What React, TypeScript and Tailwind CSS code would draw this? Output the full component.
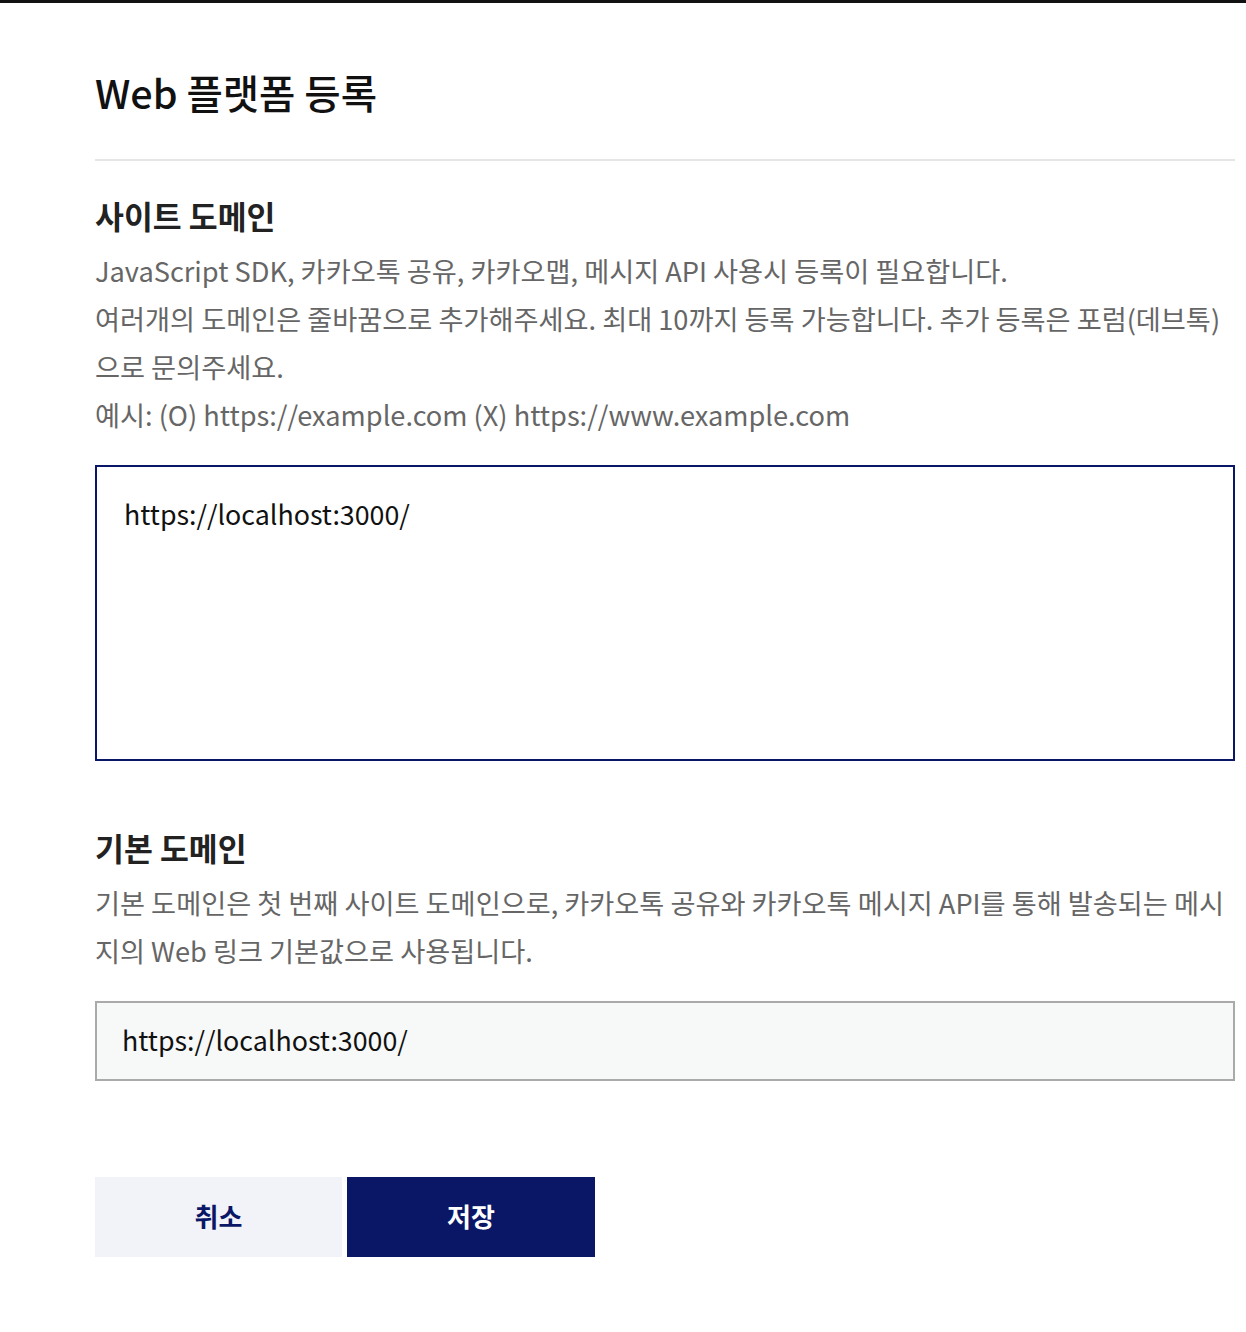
import React, { useState } from 'react';

// Web 플랫폼 등록 폼
const App: React.FC = () => {
  const [sites, setSites] = useState('https://localhost:3000/');
  const [base, setBase] = useState('https://localhost:3000/');

  return (
    <div
      className="min-h-screen bg-white border-t-[3px] border-[#111111] pl-[95px] pt-[62px] pb-[76px]"
      style={{ fontFamily: '"Noto Sans CJK KR", "Noto Sans", sans-serif' }}
    >
      <div className="w-[1140px]">
        <h1 className="text-[39.5px] leading-[53px] font-medium text-[#111111]">Web 플랫폼 등록</h1>
        <div className="mt-[41px] h-[2px] bg-[#e5e5e5]" />

        <h2 className="mt-[35px] text-[31.4px] leading-[40px] font-bold text-[#222222]">사이트 도메인</h2>
        <p className="mt-[10px] text-[27.2px] leading-[48px] text-[#666666]">
          JavaScript SDK, 카카오톡 공유, 카카오맵, 메시지 API 사용시 등록이 필요합니다.
          <br />
          여러개의 도메인은 줄바꿈으로 추가해주세요. 최대 10까지 등록 가능합니다. 추가 등록은 포럼(데브톡)으로 문의주세요.
          <br />
          예시: (O) https://example.com (X) https://www.example.com
        </p>
        <textarea
          value={sites}
          onChange={(e) => setSites(e.target.value)}
          className="mt-[27px] block w-full h-[296px] resize-none border-2 border-[#0a1766] bg-white pl-[27px] pr-[27px] pt-[23px] text-[26.8px] leading-[48px] text-[#111111] outline-none"
        />

        <h2 className="mt-[67px] text-[31.4px] leading-[40px] font-bold text-[#222222]">기본 도메인</h2>
        <p className="mt-[10px] text-[27.2px] leading-[48px] text-[#666666]">
          기본 도메인은 첫 번째 사이트 도메인으로, 카카오톡 공유와 카카오톡 메시지 API를 통해 발송되는 메시지의 Web 링크 기본값으로 사용됩니다.
        </p>
        <input
          type="text"
          value={base}
          onChange={(e) => setBase(e.target.value)}
          className="mt-[27px] block w-full h-[80px] border-2 border-[#aaaaaa] bg-[#f7f8f8] px-[25px] pb-[3px] text-[26.8px] text-[#111111] outline-none"
        />

        <div className="mt-[96px] flex gap-[5px]">
          <button className="w-[247px] h-[80px] pb-[3px] bg-[#f2f3f8] text-[#0a1766] text-[26px] font-bold">취소</button>
          <button className="w-[248px] h-[80px] pb-[3px] bg-[#0a1766] text-white text-[26px] font-bold">저장</button>
        </div>
      </div>
    </div>
  );
};

export default App;
